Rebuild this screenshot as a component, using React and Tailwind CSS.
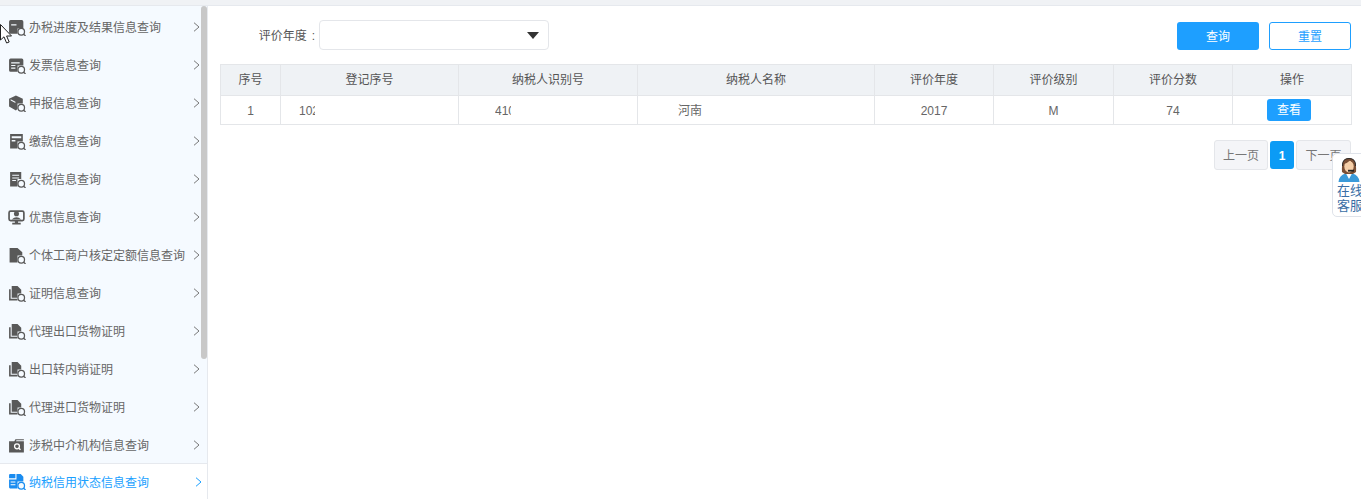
import React from "react";

const Lens = ({ color }) => (
  <>
    <circle cx="12.5" cy="12" r="3.1" fill="#f5faff" stroke={color} strokeWidth="1.2" />
    <path d="M14.8 14.3 L16.6 16" stroke={color} strokeWidth="1.3" />
  </>
);

// each query icon is a dark shape with a little magnifier on its corner
const shapes = {
  box: (c) => <path d="M1 2.5 Q1 1 2.5 1 H13 Q14.5 1 14.5 2.5 V9 H9 V14 H2.5 Q1 14 1 12.5 Z M3 5 V6.2 H8 V5 Z" fill={c} fillRule="evenodd" />,
  list: (c) => <path d="M1 3 Q1 1.5 2.5 1.5 H13 Q14.5 1.5 14.5 3 V8 H9 V14 H2.5 Q1 14 1 12.5 Z M3 5 V6 H11 V5 Z M3 7.5 V8.5 H7 V7.5 Z M3 10 V11 H7 V10 Z" fill={c} fillRule="evenodd" />,
  cube: (c) => <path d="M7.5 0.5 L14 3.5 V8 H9 V13 L7.5 14.5 L1 10.8 V3.5 Z M2.5 4 L7 6.3 V7.5 L2.5 5.2 Z" fill={c} fillRule="evenodd" />,
  form: (c) => <path d="M2 1 H14 V8 H9 V14.5 H2 Z M3.5 3 V5 H12.5 V3 Z M3.5 6.5 V8 H7 V6.5 Z" fill={c} fillRule="evenodd" />,
  bill: (c) => <path d="M2 1 H12.5 V7.5 H9 V14.5 H2 Z M4 3.5 V4.5 H10.5 V3.5 Z M4 6 V7 H10.5 V6 Z M4 8.5 V9.5 H7.5 V8.5 Z" fill={c} fillRule="evenodd" />,
  gift: (c) => (
    <>
      <rect x="1" y="2" width="14" height="9" rx="1.5" fill="none" stroke={c} strokeWidth="1.6" />
      <circle cx="8" cy="4.5" r="2.4" fill={c} />
      <path d="M3.5 10 Q8 5.5 12.5 10 Z M6.5 11 H9.5 V13 H12 V14.5 H4 V13 H6.5 Z" fill={c} />
    </>
  ),
  file: (c) => <path d="M1.5 1 H9 L13.5 5 V8 H9 V14.5 H1.5 Z" fill={c} />,
  files: (c) => <path d="M1 4 H2.5 V13 H9 V14.5 H1 Z M3.5 1 H9 L12.5 4.5 V8 H9 V12 H3.5 Z" fill={c} />,
  agency: (c) => <path d="M1 4 H6 L7 2 H15 V3 H8 L7.5 4 H15 V14.5 H1 Z" fill={c} />,
  credit: (c) => <path d="M1 2 Q1 1 2 1 H7 V5 H1 Z M8 1 H12 L14.5 3.5 V8 H9 V14.5 H2 Q1 14.5 1 13.5 V6 H8 Z M2.5 8 V9 H7 V8 Z M2.5 10.5 V11.5 H7 V10.5 Z" fill={c} fillRule="evenodd" />,
};

const QueryIcon = ({ type, color }) => (
  <svg width="18" height="17" viewBox="0 0 17 16" className="shrink-0">
    {shapes[type](color)}
    {type === "agency" ? (
      <>
        <circle cx="8.5" cy="8.8" r="2.3" fill="none" stroke="#fff" strokeWidth="1.2" />
        <path d="M10.2 10.5 L11.8 12" stroke="#fff" strokeWidth="1.3" />
      </>
    ) : type === "gift" ? null : (
      <Lens color={color} />
    )}
  </svg>
);

const Chevron = ({ color }) => (
  <svg width="7" height="10" viewBox="0 0 7 10" className="ml-auto shrink-0">
    <path d="M1 0.7 L6 5 L1 9.3" fill="none" stroke={color} strokeWidth="1" />
  </svg>
);

const menuItems = [
  { label: "办税进度及结果信息查询", icon: "box" },
  { label: "发票信息查询", icon: "list" },
  { label: "申报信息查询", icon: "cube" },
  { label: "缴款信息查询", icon: "form" },
  { label: "欠税信息查询", icon: "bill" },
  { label: "优惠信息查询", icon: "gift" },
  { label: "个体工商户核定定额信息查询", icon: "file" },
  { label: "证明信息查询", icon: "files" },
  { label: "代理出口货物证明", icon: "files" },
  { label: "出口转内销证明", icon: "files" },
  { label: "代理进口货物证明", icon: "files" },
  { label: "涉税中介机构信息查询", icon: "agency" },
];

const columns = [
  { title: "序号", width: "w-[60px]" },
  { title: "登记序号", width: "w-[178px]" },
  { title: "纳税人识别号", width: "w-[179px]" },
  { title: "纳税人名称", width: "w-[237px]" },
  { title: "评价年度", width: "w-[119px]" },
  { title: "评价级别", width: "w-[120px]" },
  { title: "评价分数", width: "w-[119px]" },
  { title: "操作", width: "w-[119px]" },
];

const Sidebar = () => (
  <div className="w-[208px] h-[493px] shrink-0 bg-[#f5faff] border-r border-[#e6e9ee] flex flex-col overflow-hidden relative">
    <div className="absolute right-0 top-0 w-[6px] h-[353px] bg-[#c8c8c8] rounded-[3px]"></div>
    <div className="pt-[1px]">
      {menuItems.map((item) => (
        <div key={item.label} className="h-[38px] flex items-center pt-[2px] pl-[8px] pr-[7px] text-xs text-[#666666]">
          <QueryIcon type={item.icon} color="#595959" />
          <span className="ml-[3px] pt-[2px] whitespace-nowrap">{item.label}</span>
          <Chevron color="#777777" />
        </div>
      ))}
    </div>
    <div className="h-[36px] bg-white border-t border-[#e6e9ee] flex items-center pl-[8px] pr-[5px] text-xs text-[#1a9fff]">
      <QueryIcon type="credit" color="#1a8cf0" />
      <span className="ml-[3px] pt-[2px] whitespace-nowrap">纳税信用状态信息查询</span>
      <Chevron color="#1a9fff" />
    </div>
  </div>
);

const Cursor = () => (
  <svg width="13" height="21" viewBox="0 0 13 21" className="absolute left-0 top-[24px]">
    <path d="M0.5 0.5 V16 L4 12.8 L6.6 19 L9.2 18 L6.6 12 H11.5 Z" fill="#fff" stroke="#222" strokeWidth="1" />
  </svg>
);

const ServiceWidget = () => (
  <div className="absolute left-[1332px] top-[153px] w-[40px] h-[64px] bg-white border border-[#dfe3ea] rounded-[5px] pl-[4px] text-[13px] leading-[15px] text-[#3a6ea5]">
    <svg width="22" height="25" viewBox="0 0 22 25" className="mt-[3px] ml-[1px]">
      <path d="M0.5 25 Q1 18 8 16.5 H14 Q21 18 21.5 25 Z" fill="#3a9ad9" />
      <path d="M8 16.5 L11 22 L14 16.5 Z" fill="#fff" />
      <path d="M4 15 Q3 1 11 1 Q19 1 18 15 L15 17 H7 Z" fill="#7a4f35" />
      <ellipse cx="11" cy="9.5" rx="4.7" ry="6" fill="#f6cfa8" />
      <path d="M5.5 7 Q9 6.5 12 3.5 Q15 6 16.5 7 L16 3 L11 1.5 L6 3 Z" fill="#7a4f35" />
      <path d="M4.5 9 Q4 1.5 11 1.5 Q18 1.5 17.5 9" fill="none" stroke="#2b2b2b" strokeWidth="1" />
      <rect x="10" y="12.8" width="6" height="1.8" fill="#222" />
    </svg>
    <div className="whitespace-nowrap mt-[1px]">在线</div>
    <div className="whitespace-nowrap">客服</div>
  </div>
);

const App = () => (
  <div className="relative w-[1361px] h-[499px] overflow-hidden bg-white font-['Liberation_Sans','Noto_Sans_CJK_SC',sans-serif]">
    <div className="h-[6px] bg-[#f0f2f5] border-b border-[#e6e9ee]"></div>
    <div className="flex">
      <Sidebar />
      <div className="flex-1 min-w-0 pl-[12px] pr-[10px]">
        <div className="h-[58px] flex items-start pt-[14px]">
          <span className="w-[99px] h-[30px] leading-[32px] text-right text-xs text-[#555555] whitespace-nowrap pr-[4px]">
            评价年度<span className="ml-[5px]">:</span>
          </span>
          <div className="w-[230px] h-[30px] bg-white border border-[#e4e6ea] rounded-[4px] flex items-center justify-end pr-[9px]">
            <div className="w-0 h-0 border-x-[6px] border-x-transparent border-t-[7px] border-t-[#333333]"></div>
          </div>
          <button className="ml-auto w-[82px] h-[28px] mt-[2px] pt-[2px] bg-[#1e9fff] text-white text-xs rounded-[3px]">查询</button>
          <button className="ml-[10px] w-[82px] h-[28px] mt-[2px] pt-[2px] bg-white border border-[#1e9fff] text-[#1e9fff] text-xs rounded-[3px]">重置</button>
        </div>
        <table className="table-fixed border-collapse w-[1132px] text-xs text-[#555555]">
          <thead>
            <tr className="h-[31px] bg-[#eff2f5]">
              {columns.map((col) => (
                <th key={col.title} className={`${col.width} border border-[#e4e6e9] font-normal`}>{col.title}</th>
              ))}
            </tr>
          </thead>
          <tbody>
            <tr className="h-[29px] text-[#666666] text-center">
              <td className="border border-[#e4e6e9] pt-[2px]">1</td>
              <td className="border border-[#e4e6e9] pt-[2px] text-left pl-[18px]">
                <span className="inline-block w-[16px] overflow-hidden align-bottom">102</span>
              </td>
              <td className="border border-[#e4e6e9] pt-[2px] text-left pl-[36px]">
                <span className="inline-block w-[16px] overflow-hidden align-bottom">410</span>
              </td>
              <td className="border border-[#e4e6e9] pt-[2px] text-left pl-[40px]">河南</td>
              <td className="border border-[#e4e6e9] pt-[2px]">2017</td>
              <td className="border border-[#e4e6e9] pt-[2px]">M</td>
              <td className="border border-[#e4e6e9] pt-[2px]">74</td>
              <td className="border border-[#e4e6e9] text-left pl-[34px]">
                <button className="w-[44px] h-[22px] bg-[#1e9fff] text-white text-xs rounded-[3px] align-middle">查看</button>
              </td>
            </tr>
          </tbody>
        </table>
        <div className="flex justify-end items-start gap-[2px] mt-[15px] text-xs">
          <div className="w-[54px] h-[30px] leading-[30px] text-center bg-[#f4f5f8] border border-[#e4e6ea] rounded-[3px] text-[#777777]">上一页</div>
          <div className="w-[24px] h-[28px] mt-[1px] leading-[30px] text-center bg-[#0b9bf5] rounded-[3px] text-white font-bold">1</div>
          <div className="w-[55px] h-[30px] leading-[30px] text-center bg-[#f4f5f8] border border-[#e4e6ea] rounded-[3px] text-[#777777]">下一页</div>
        </div>
      </div>
    </div>
    <Cursor />
    <ServiceWidget />
  </div>
);

export default App;
